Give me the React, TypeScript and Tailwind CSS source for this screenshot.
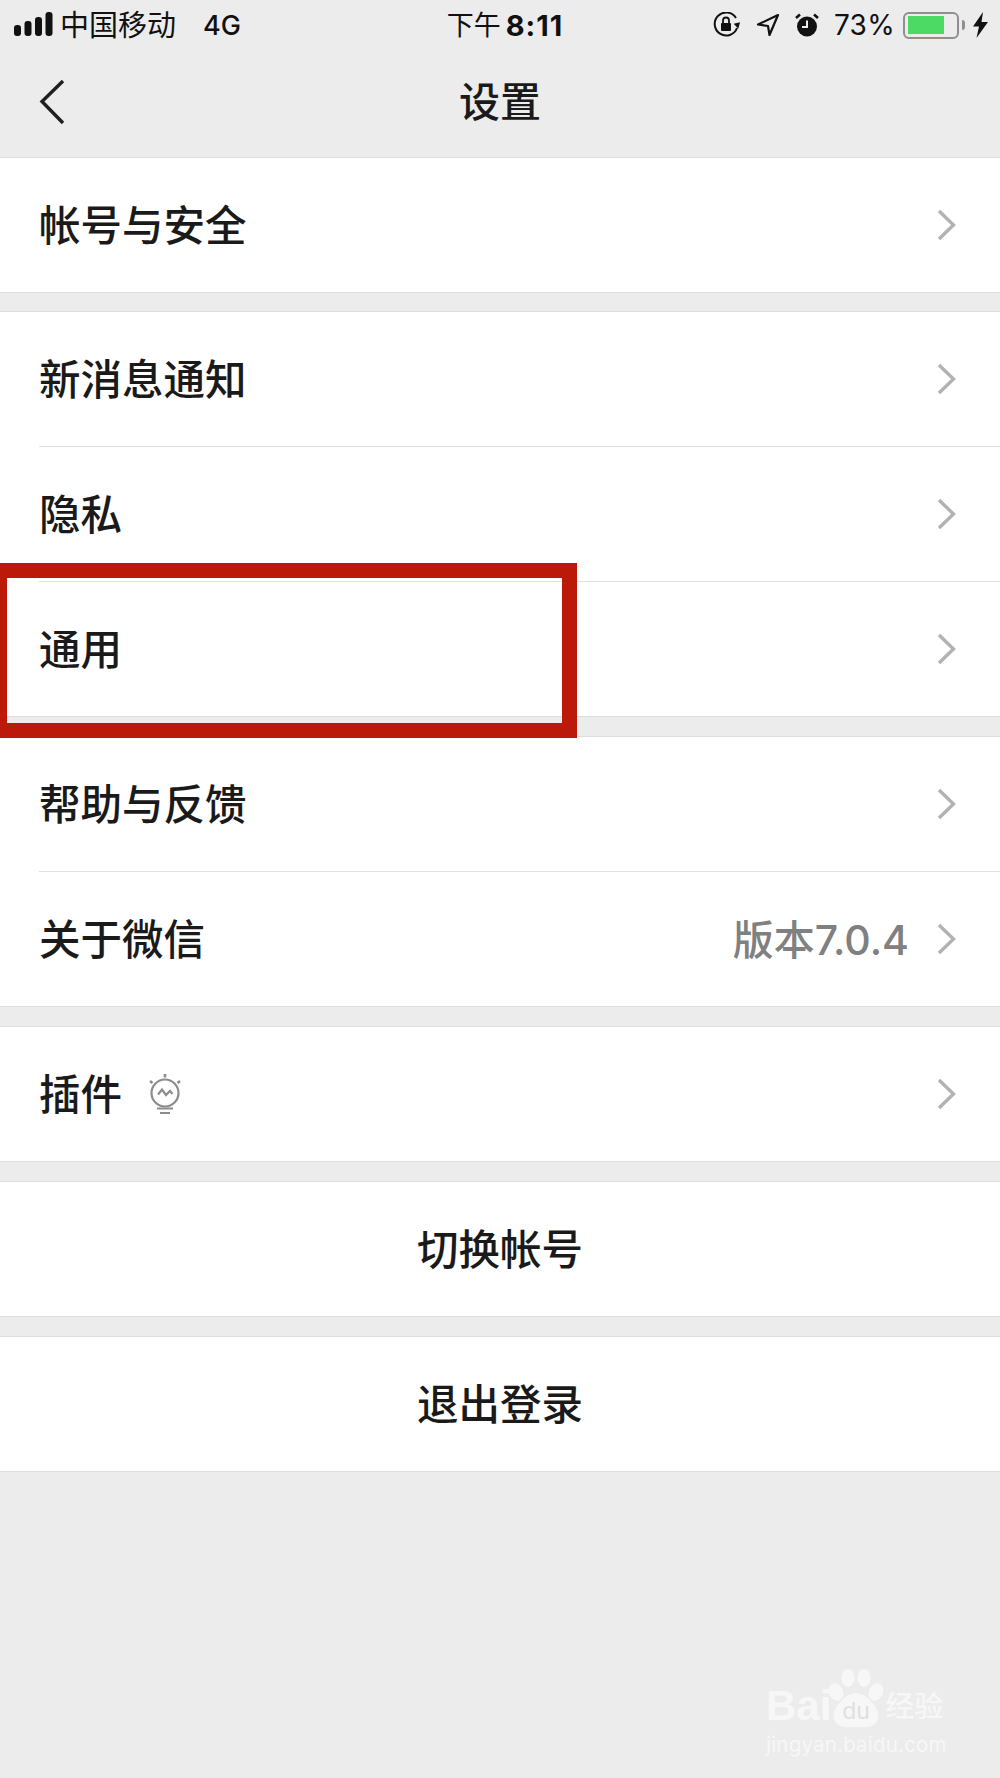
import { FC, ReactNode } from "react";

const FONT = "font-['Inter','Noto_Sans_CJK_SC',sans-serif]";

const Chevron: FC = () => (
  <svg width="20" height="32" viewBox="0 0 20 32" className="shrink-0" fill="none">
    <path d="M2 2 L16.5 16 L2 30" stroke="#b2b2b2" strokeWidth="3.4" />
  </svg>
);

const SignalBars: FC = () => (
  <svg width="40" height="26" viewBox="0 0 40 26" fill="#111">
    <rect x="0" y="13" width="7" height="11" rx="3" />
    <rect x="10.5" y="9" width="7" height="15" rx="3" />
    <rect x="21" y="5" width="7" height="19" rx="3" />
    <rect x="31.5" y="0" width="7" height="24" rx="3" />
  </svg>
);

const LockRotation: FC = () => (
  <svg width="28" height="26" viewBox="0 0 28 26" fill="none">
    <path d="M24 16 A11.5 11.5 0 1 1 23 6" stroke="#111" strokeWidth="2" />
    <path d="M27.5 11 L21 11 L24.5 17 Z" fill="#111" transform="rotate(-12 24 13)" />
    <rect x="8" y="11" width="10" height="8" rx="1" fill="#111" />
    <path d="M10 11 V8.5 A3 3 0 0 1 16 8.5 V11" stroke="#111" strokeWidth="1.8" />
  </svg>
);

const LocationArrow: FC = () => (
  <svg width="24" height="24" viewBox="0 0 24 24" fill="none">
    <path d="M22 2 L2 11.5 L12 13 L13.5 22 Z" stroke="#111" strokeWidth="2.2" strokeLinejoin="round" />
  </svg>
);

const AlarmClock: FC = () => (
  <svg width="24" height="24" viewBox="0 0 24 24">
    <circle cx="12" cy="13.5" r="10" fill="#111" />
    <path d="M12 7.5 V14 H7" stroke="#ececec" strokeWidth="2" fill="none" />
    <path d="M1 5 L5 1.5 M23 5 L19 1.5" stroke="#111" strokeWidth="2.6" />
  </svg>
);

const Battery: FC = () => (
  <div className="flex items-center">
    <div className="flex h-[27px] w-[56px] items-center rounded-[6px] border-2 border-[#8f8f8f] px-[3px]">
      <div className="h-[18px] w-[36px] bg-[#4cd964]" />
    </div>
    <div className="ml-[3px] h-[10px] w-[3px] rounded-r-[3px] bg-[#8f8f8f]" />
  </div>
);

const Bolt: FC = () => (
  <svg width="15" height="26" viewBox="0 0 15 26" fill="#111">
    <path d="M10 0 L0 14.5 H6 L3.5 26 L15 10 H8.5 Z" />
  </svg>
);

const Bulb: FC = () => (
  <svg width="36" height="42" viewBox="0 0 36 42" fill="none" stroke="#8c8c8c">
    <circle cx="18" cy="20" r="13.5" strokeWidth="2.2" fill="none" />
    <path d="M11 21.5 L15 16.5 L19 22 L23 18 L25.5 21" strokeWidth="2.2" />
    <path d="M18 1 V4.5 M3 8 L5.5 10 M33 8 L30.5 10" strokeWidth="2.6" />
    <path d="M10 35.5 H26 M13 40 H23" strokeWidth="2.2" />
  </svg>
);

const Paw: FC = () => (
  <svg width="58" height="60" viewBox="0 0 58 60" fill="#f7f7f7">
    <ellipse cx="9" cy="23" rx="7" ry="9" transform="rotate(-25 9 23)" />
    <ellipse cx="21" cy="9" rx="6.5" ry="9" />
    <ellipse cx="37" cy="9" rx="6.5" ry="9" />
    <ellipse cx="49" cy="23" rx="7" ry="9" transform="rotate(25 49 23)" />
    <path d="M29 24 C38 24 56 40 50 52 C46 60 36 58 29 58 C22 58 12 60 8 52 C2 40 20 24 29 24 Z" />
    <text x="29" y="50" textAnchor="middle" fontSize="23" fill="#e0e0e0" fontFamily="Inter, sans-serif">
      du
    </text>
  </svg>
);

const Row: FC<{ label: string; children?: ReactNode; value?: string }> = ({ label, children, value }) => (
  <div className="flex h-[134px] items-center pl-[39px] pr-[43px]">
    <span className="pt-[3px] text-[41.5px] font-medium leading-none text-[#1a1a1a]">{label}</span>
    {children}
    <div className="flex-1" />
    {value && <span className="mr-[28px] pt-[3px] text-[41px] font-medium leading-none text-[#808080]">{value}</span>}
    <Chevron />
  </div>
);

const Divider: FC = () => <div className="ml-[39px] h-px bg-[#e2e2e2]" />;

const Group: FC<{ children: ReactNode; className?: string }> = ({ children, className }) => (
  <div className={`border-y border-[#dedede] bg-white ${className ?? ""}`}>{children}</div>
);

const ActionRow: FC<{ label: string }> = ({ label }) => (
  <Group>
    <div className="flex h-[134px] items-center justify-center pt-[3px] text-[41.5px] font-medium leading-none text-[#1a1a1a]">
      {label}
    </div>
  </Group>
);

const App: FC = () => {
  return (
    <div className={`relative h-[1778px] w-[1000px] overflow-hidden bg-[#ececec] ${FONT}`}>
      {/* status bar */}
      <div className="grid h-[50px] grid-cols-3 items-center text-[#111]">
        <div className="flex items-center pl-[14px]">
          <SignalBars />
          <span className="ml-[6px] text-[29px] leading-none">中国移动</span>
          <span className="ml-[27px] text-[27px] font-medium leading-none">4G</span>
        </div>
        <div className="flex items-center justify-center pl-[10px] leading-none">
          <span className="text-[27px]">下午</span>
          <span className="ml-[5px] text-[29px] font-bold tracking-[1px]">8:11</span>
        </div>
        <div className="flex items-center justify-end gap-[15px] pr-[12px]">
          <LockRotation />
          <LocationArrow />
          <AlarmClock />
          <span className="text-[28px] leading-none tracking-[0.3px]">73%</span>
          <div className="-ml-[7px]">
            <Battery />
          </div>
          <div className="-ml-[7px]">
            <Bolt />
          </div>
        </div>
      </div>

      {/* nav bar */}
      <div className="relative flex h-[107px] items-center justify-center pb-[2px]">
        <svg
          width="28"
          height="46"
          viewBox="0 0 28 46"
          fill="none"
          className="absolute left-[38px] top-[29px]"
        >
          <path d="M25 2 L4 22.5 L25 44" stroke="#1f1f1f" strokeWidth="3.4" />
        </svg>
        <span className="text-[41px] font-medium leading-none text-[#1a1a1a]">设置</span>
      </div>

      <div className="flex flex-col gap-[19px]">
        <Group className="-mb-px">
          <Row label="帐号与安全" />
        </Group>
        <Group>
          <Row label="新消息通知" />
          <Divider />
          <Row label="隐私" />
          <Divider />
          <Row label="通用" />
        </Group>
        <Group>
          <Row label="帮助与反馈" />
          <Divider />
          <Row label="关于微信" value="版本7.0.4" />
        </Group>
        <Group>
          <Row label="插件">
            <div className="ml-[25px]">
              <Bulb />
            </div>
          </Row>
        </Group>
        <ActionRow label="切换帐号" />
        <ActionRow label="退出登录" />
      </div>

      {/* red highlight drawn over the screenshot */}
      <div className="absolute left-[-8px] top-[563px] h-[175px] w-[585px] border-[15px] border-[#bb1a0a]" />

      {/* watermark */}
      <div className="absolute left-[766px] top-[1669px] w-[184px] text-[#f7f7f7]">
        <div className="flex h-[60px] items-end">
          <span className="font-['Liberation_Sans','Noto_Sans_CJK_SC',sans-serif] text-[42px] font-bold leading-[46px]">Bai</span>
          <div className="-ml-[4px]">
            <Paw />
          </div>
          <span className="pb-[2px] text-[29px] font-medium leading-[40px]">经验</span>
        </div>
        <div className="mt-[4px] text-[20.5px] leading-[24px] tracking-[0.2px]">jingyan.baidu.com</div>
      </div>
    </div>
  );
};

export default App;
